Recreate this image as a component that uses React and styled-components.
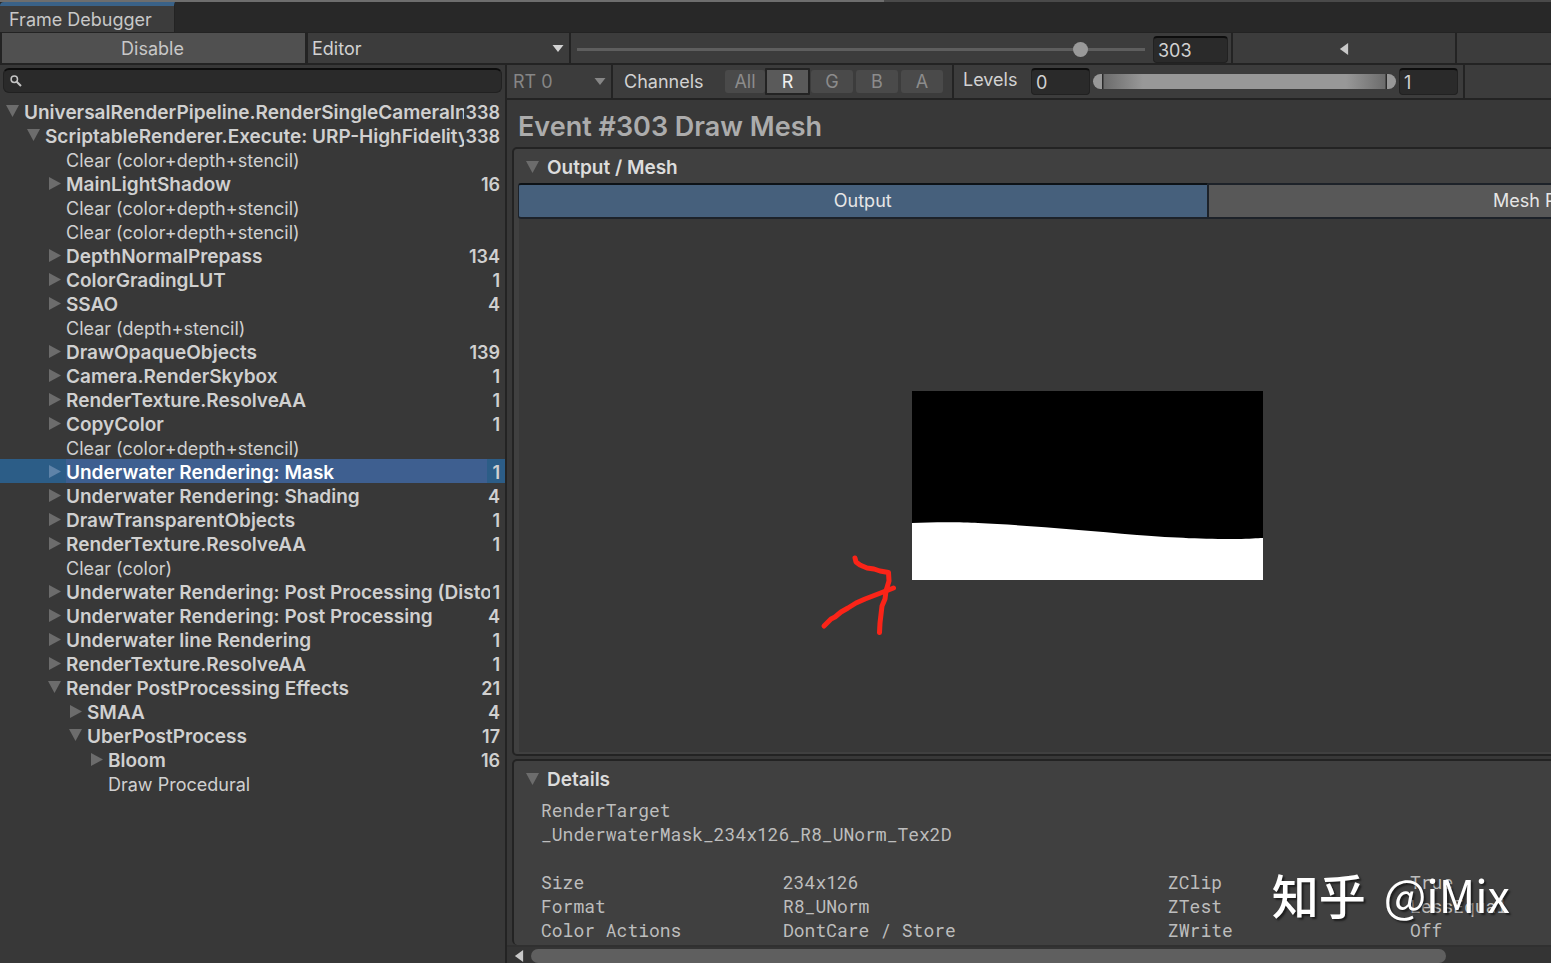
import React from "react";
import styled, { createGlobalStyle, css } from "styled-components";

const LINE = "#232323";

const GlobalStyle = createGlobalStyle`
  * { box-sizing: border-box; }
  body {
    margin: 0;
    background: #383838;
    color: #c8c8c8;
    font-family: Inter, "Liberation Sans", sans-serif;
    font-size: 18px;
    line-height: 24px;
    overflow: hidden;
  }
  button, input, select { font: inherit; color: inherit; }
`;

const Window = styled.div`
  height: 100vh;
  display: flex;
  flex-direction: column;
  overflow: hidden;
`;

const TopEdge = styled.div`
  flex: none;
  height: 2px;
  background: linear-gradient(90deg, #6e6e6e 57%, #4a4a4a 57%);
`;

const TabBar = styled.nav`
  flex: none;
  height: 31px;
  display: flex;
  background: #282828;
  border-bottom: 1px solid ${LINE};
`;

const WindowTab = styled.button`
  width: 175px;
  border: 0;
  border-right: 1px solid ${LINE};
  border-top: 4px solid #3a6288;
  border-radius: 4px 0 0 0;
  background: #3c3c3c;
  padding: 2px 9px 0;
  text-align: left;
  white-space: nowrap;
`;

const Toolbar = styled.div`
  flex: none;
  height: 32px;
  display: flex;
  background: #3c3c3c;
  border-bottom: 2px solid ${LINE};
  overflow: hidden;
`;

const DisableButton = styled.button`
  flex: none;
  width: 308px;
  border: solid ${LINE};
  border-width: 0 3px 0 2px;
  background: #505050;
  padding: 2px 2px 0 0;
`;

const SelectWrap = styled.div`
  flex: none;
  width: ${(p) => p.$width}px;
  display: flex;
  align-items: center;
  padding-right: 5px;
  border-right: 2px solid ${LINE};
  color: ${(p) => (p.$dim ? "#868686" : "#d2d2d2")};
`;

const Select = styled.select`
  flex: 1;
  min-width: 0;
  appearance: none;
  border: 0;
  background: transparent;
  padding: 1px 0 0 ${(p) => (p.$inset ? 6 : 4)}px;
  outline: 0;
`;

const SliderCell = styled.div`
  flex: none;
  width: 582px;
  padding: 0 8px 0 6px;
  display: flex;
  align-items: center;
`;

const EventSlider = styled.input`
  appearance: none;
  width: 100%;
  height: 17px;
  margin: 2px 0 0;
  background: linear-gradient(#5e5e5e, #5e5e5e) center / 100% 3px no-repeat;
  &::-webkit-slider-thumb {
    appearance: none;
    width: 15px;
    height: 15px;
    border-radius: 50%;
    background: #999;
  }
`;

const Field = styled.input`
  flex: none;
  align-self: center;
  width: ${(p) => p.$width}px;
  height: 27px;
  border: 1px solid #212121;
  border-top: 2px solid #0d0d0d;
  border-radius: 4px;
  background: #2a2a2a;
  color: #d2d2d2;
  padding: 0 4px;
  outline: 0;
`;

const EventField = styled(Field)`
  align-self: flex-end;
`;

const StepButton = styled.button`
  flex: none;
  width: 224px;
  margin-left: ${(p) => (p.$gap ? 3 : 0)}px;
  border: 0;
  border-left: 2px solid ${LINE};
  background: transparent;
  padding: 1px 0 0;
  display: flex;
  align-items: center;
  justify-content: center;
`;

const Body = styled.div`
  flex: 1;
  min-height: 0;
  display: flex;
`;

const TreePane = styled.aside`
  flex: none;
  width: 507px;
  border-right: 2px solid ${LINE};
  display: flex;
  flex-direction: column;
`;

const SearchBox = styled.label`
  flex: none;
  height: 25px;
  margin: 3px 3px 6px;
  padding: 0 6px;
  display: flex;
  align-items: center;
  gap: 6px;
  border: 1px solid #212121;
  border-top: 2px solid #0d0d0d;
  border-radius: 6px;
  background: #2a2a2a;
`;

const SearchInput = styled.input`
  flex: 1;
  min-width: 0;
  border: 0;
  padding: 0;
  outline: 0;
  background: transparent;
`;

const Tree = styled.ul`
  flex: 1;
  margin: 0;
  padding: 0;
  list-style: none;
  overflow: hidden;
`;

const Row = styled.li`
  height: 24px;
  display: flex;
  align-items: center;
  padding: 3px 5px 0 ${(p) => 6 + p.$depth * 21}px;
  white-space: nowrap;
  color: #d0d0d0;
  font-weight: ${(p) => (p.$group ? 600 : 400)};
  ${(p) =>
    p.$selected &&
    css`
      background: linear-gradient(90deg, transparent 66px, #3e5f90 66px calc(100% - 18px), transparent calc(100% - 18px)), #2c5d87;
      color: #fff;
    `}
`;

const Twisty = styled.span`
  flex: none;
  width: 18px;
  display: flex;
  align-items: center;
  padding-bottom: 3px;
  color: ${(p) => (p.$selected ? "#5f83a8" : "#6c6c6c")};
`;

const RowLabel = styled.span`
  flex: 1;
  min-width: 0;
  overflow: hidden;
  font-size: ${(p) => (p.$group ? 19 : 18)}px;
`;

const RowCount = styled.span`
  flex: none;
  padding-left: 2px;
  color: #d0d0d0;
`;

const DetailPane = styled.main`
  flex: 1;
  min-width: 0;
  display: flex;
  flex-direction: column;
  overflow: hidden;
`;

const TargetBar = styled(Toolbar)`
  height: 35px;
`;

const ChannelGroup = styled.div`
  flex: none;
  display: flex;
  align-items: center;
  padding: 0 6px 0 11px;
  border-right: 2px solid ${LINE};
`;

const GroupLabel = styled.span`
  flex: none;
  width: 101px;
  color: #d2d2d2;
`;

const Channel = styled.button`
  width: ${(p) => (p.$active ? 45 : 42)}px;
  height: ${(p) => (p.$active ? 27 : 23)}px;
  padding: 0;
  margin-right: ${(p) => (p.$active ? 1 : 3)}px;
  border: 0;
  border-radius: 3px;
  background: #4a4a4a;
  color: #8c8c8c;
  ${(p) => p.$wide && css`width: 40px; margin-right: 0;`}
  ${(p) =>
    p.$active &&
    css`
      border: 2px solid ${LINE};
      border-radius: 1px;
      background: #5a5a5a;
      color: #f0f0f0;
    `}
`;

const LevelsGroup = styled.div`
  flex: none;
  display: flex;
  align-items: center;
  gap: 3px;
  padding: 0 5px 0 9px;
  border-right: 2px solid ${LINE};
`;

const LevelsLabel = styled.span`
  width: 65px;
  padding-bottom: 3px;
  color: #d2d2d2;
`;

const LevelsTrack = styled.div`
  position: relative;
  width: 303px;
  height: 15px;
  border-radius: 8px;
  background: linear-gradient(90deg, #989898 0 9px, #2a2a2a 9px 10px, #6c6c6c 11px, #989898 50px calc(100% - 50px), #6c6c6c calc(100% - 11px), #2a2a2a calc(100% - 10px) calc(100% - 9px), #989898 calc(100% - 9px));
`;

const LevelsThumb = styled.input`
  position: absolute;
  inset: 0;
  width: 100%;
  height: 15px;
  margin: 0;
  appearance: none;
  background: transparent;
  pointer-events: none;
  &::-webkit-slider-thumb {
    appearance: none;
    width: 9px;
    height: 15px;
    background: transparent;
    pointer-events: auto;
  }
`;

const ScrollContent = styled.div`
  flex: 1;
  min-height: 0;
  width: 1396px;
  padding-left: 5px;
  display: flex;
  flex-direction: column;
  overflow: hidden;
`;

const EventTitle = styled.h1`
  flex: none;
  margin: 0;
  padding: 11px 6px 4px;
  font-size: 27px;
  line-height: 32px;
  font-weight: 600;
  color: #acacac;
`;

const Panel = styled.section`
  display: flex;
  flex-direction: column;
  background: #404040;
  border: 2px solid ${LINE};
  border-radius: 5px;
  ${(p) =>
    p.$grow
      ? css`flex: 1; min-height: 0; margin-bottom: 3px; padding: 0 5px 2px;`
      : css`flex: none; height: 186px; padding: 0; border-bottom: 0; overflow: hidden;`}
`;

const PanelHeader = styled.h2`
  flex: none;
  height: 34px;
  margin: 0;
  padding: ${(p) => p.$inset};
  display: flex;
  align-items: center;
  gap: 8px;
  font-size: 19px;
  font-weight: 600;
  color: #dcdcdc;
`;

const HeaderTwisty = styled.span`
  display: flex;
  color: #6c6c6c;
`;

const PreviewTabs = styled.div`
  flex: none;
  display: grid;
  grid-template-columns: 1fr 1fr;
  margin: 0 -1px;
`;

const PreviewTab = styled.button`
  height: 36px;
  border: 2px solid #1d2229;
  border-width: 2px 0 2px 1px;
  padding: 0;
  color: #e6e6e6;
  background: #585858;
  ${(p) =>
    p.$active &&
    css`
      background: #46607c;
      border-top-color: #0d1216;
      border-right: 1px solid #1d2229;
      border-radius: 3px 0 0 3px;
    `}
`;

const PreviewStage = styled.div`
  flex: 1;
  min-height: 0;
  background: #383838;
  display: flex;
`;

const PreviewView = styled.div`
  width: 1137px;
  display: flex;
  align-items: center;
  justify-content: center;
`;

const PreviewImage = styled.div`
  position: relative;
  width: 351px;
  height: 189px;
  & > svg { display: block; }
`;

const Annotation = styled.svg`
  position: absolute;
  left: -92px;
  top: 160px;
`;

const Details = styled.div`
  padding: 3px 27px 0;
  font-family: "Roboto Mono", "DejaVu Sans Mono", "Liberation Mono", monospace;
  color: #bdbdbd;
`;

const Line = styled.p`
  margin: 0;
`;

const PropertyTable = styled.table`
  margin-top: 24px;
  border-collapse: collapse;
  table-layout: fixed;
  width: 1012px;
  th, td {
    padding: 0;
    width: 242px;
    font-weight: 400;
    text-align: left;
    white-space: nowrap;
  }
  td:nth-child(2) { width: 385px; }
`;

const ScrollBar = styled.div`
  flex: none;
  height: 18px;
  display: flex;
  align-items: flex-end;
  padding-left: 6px;
  background: #343434;
  border-top: 2px solid #303030;
`;

const ScrollArrow = styled.button`
  flex: none;
  width: 18px;
  height: 14px;
  border: 0;
  padding: 0;
  background: transparent;
  display: flex;
  align-items: center;
`;

const ScrollThumb = styled.div`
  flex: 1;
  margin-right: 105px;
  height: 14px;
  border-radius: 7px;
  background: #5f5f5f;
`;

const Watermark = styled.div`
  position: fixed;
  right: 41px;
  bottom: 34px;
  display: flex;
  gap: 18px;
  align-items: center;
  font-family: "Noto Sans CJK SC", sans-serif;
  font-size: 45px;
  line-height: 70px;
  color: #fff;
  text-shadow: 2px 2px 2px rgba(0, 0, 0, 0.55);
  pointer-events: none;
`;

const Brand = styled.span`
  font-size: 47px;
  font-weight: 500;
`;

function Triangle({ dir, size = 13 }) {
  const points = {
    down: "0,0 13,0 6.5,12",
    right: "1,0 13,6.5 1,13",
    left: "11,0 11,13 2,6.5",
  }[dir];
  return (
    <svg width={size} height={size} viewBox="0 0 13 13" aria-hidden="true">
      <polygon points={points} fill="currentColor" />
    </svg>
  );
}

function DropArrow() {
  return (
    <svg width="12" height="7" viewBox="0 0 12 7" aria-hidden="true">
      <polygon points="0.5,0 11.5,0 6,7" fill="currentColor" />
    </svg>
  );
}

const events = [
  [0, "UniversalRenderPipeline.RenderSingleCameraIn", 338, "down"],
  [1, "ScriptableRenderer.Execute: URP-HighFidelity", 338, "down"],
  [2, "Clear (color+depth+stencil)"],
  [2, "MainLightShadow", 16, "right"],
  [2, "Clear (color+depth+stencil)"],
  [2, "Clear (color+depth+stencil)"],
  [2, "DepthNormalPrepass", 134, "right"],
  [2, "ColorGradingLUT", 1, "right"],
  [2, "SSAO", 4, "right"],
  [2, "Clear (depth+stencil)"],
  [2, "DrawOpaqueObjects", 139, "right"],
  [2, "Camera.RenderSkybox", 1, "right"],
  [2, "RenderTexture.ResolveAA", 1, "right"],
  [2, "CopyColor", 1, "right"],
  [2, "Clear (color+depth+stencil)"],
  [2, "Underwater Rendering: Mask", 1, "right", true],
  [2, "Underwater Rendering: Shading", 4, "right"],
  [2, "DrawTransparentObjects", 1, "right"],
  [2, "RenderTexture.ResolveAA", 1, "right"],
  [2, "Clear (color)"],
  [2, "Underwater Rendering: Post Processing (Disto", 1, "right"],
  [2, "Underwater Rendering: Post Processing", 4, "right"],
  [2, "Underwater line Rendering", 1, "right"],
  [2, "RenderTexture.ResolveAA", 1, "right"],
  [2, "Render PostProcessing Effects", 21, "down"],
  [3, "SMAA", 4, "right"],
  [3, "UberPostProcess", 17, "down"],
  [4, "Bloom", 16, "right"],
  [4, "Draw Procedural"],
];

const properties = [
  ["Size", "234x126", "ZClip", "True"],
  ["Format", "R8_UNorm", "ZTest", "LessEqual"],
  ["Color Actions", "DontCare / Store", "ZWrite", "Off"],
];

export default function App() {
  return (
    <Window>
      <GlobalStyle />
      <TopEdge />
      <TabBar>
        <WindowTab>Frame Debugger</WindowTab>
      </TabBar>
      <Toolbar>
        <DisableButton>Disable</DisableButton>
        <SelectWrap $width={263}>
          <Select aria-label="Target">
            <option>Editor</option>
          </Select>
          <DropArrow />
        </SelectWrap>
        <SliderCell>
          <EventSlider type="range" min="1" max="338" defaultValue="303" aria-label="Event" />
        </SliderCell>
        <EventField $width={75} defaultValue="303" aria-label="Event number" />
        <StepButton $gap aria-label="Previous event">
          <Triangle dir="left" size={12} />
        </StepButton>
        <StepButton aria-label="Next event">
          <Triangle dir="right" size={12} />
        </StepButton>
      </Toolbar>
      <Body>
        <TreePane>
          <SearchBox>
            <svg width="12" height="12" viewBox="0 0 12 12" fill="none" stroke="#c4c4c4" strokeWidth="1.5" aria-hidden="true">
              <circle cx="4.3" cy="4.3" r="3.2" />
              <path d="M6.7 6.7L11 11" strokeWidth="2" />
            </svg>
            <SearchInput type="text" aria-label="Search events" />
          </SearchBox>
          <Tree role="tree">
            {events.map(([depth, label, count, arrow, selected], i) => (
              <Row key={i} role="treeitem" aria-selected={!!selected} $depth={depth} $group={!!arrow} $selected={selected}>
                <Twisty $selected={selected}>{arrow && <Triangle dir={arrow} />}</Twisty>
                <RowLabel $group={!!arrow}>{label}</RowLabel>
                {count && <RowCount>{count}</RowCount>}
              </Row>
            ))}
          </Tree>
        </TreePane>
        <DetailPane>
          <TargetBar>
            <SelectWrap $width={106} $dim>
              <Select $inset aria-label="Render target">
                <option>RT 0</option>
              </Select>
              <DropArrow />
            </SelectWrap>
            <ChannelGroup>
              <GroupLabel>Channels</GroupLabel>
              <Channel $wide>All</Channel>
              <Channel $active>R</Channel>
              <Channel>G</Channel>
              <Channel>B</Channel>
              <Channel>A</Channel>
            </ChannelGroup>
            <LevelsGroup>
              <LevelsLabel>Levels</LevelsLabel>
              <Field $width={59} defaultValue="0" aria-label="Black level" />
              <LevelsTrack>
                <LevelsThumb type="range" min="0" max="1" step="0.01" defaultValue="0" aria-label="Minimum level" />
                <LevelsThumb type="range" min="0" max="1" step="0.01" defaultValue="1" aria-label="Maximum level" />
              </LevelsTrack>
              <Field $width={59} defaultValue="1" aria-label="White level" />
            </LevelsGroup>
          </TargetBar>
          <ScrollContent>
            <EventTitle>Event #303 Draw Mesh</EventTitle>
            <Panel $grow>
              <PanelHeader $inset="3px 7px 0">
                <HeaderTwisty><Triangle dir="down" /></HeaderTwisty>
                Output / Mesh
              </PanelHeader>
              <PreviewTabs>
                <PreviewTab $active>Output</PreviewTab>
                <PreviewTab>Mesh Preview</PreviewTab>
              </PreviewTabs>
              <PreviewStage>
                <PreviewView>
                  <PreviewImage>
                    <svg width="351" height="189" viewBox="0 0 351 189" aria-hidden="true">
                      <rect width="351" height="189" fill="#000" />
                      <path d="M0 132C20 131 50 131 66 132C110 134 170 139 225 144C265 147 290 148 325 148C338 148 345 147 351 147V189H0Z" fill="#fff" />
                    </svg>
                    <Annotation width="84" height="90" viewBox="0 0 84 90" fill="none" stroke="#fb2418" strokeWidth="5" strokeLinecap="round" strokeLinejoin="round" aria-hidden="true">
                      <path d="M35 7L36 11L40 14L47 17L54 18L60 20L68.500 21.500L69 30L66 40L65 48L62 55L60 72L59.500 81.500" />
                      <path d="M4 75L7 72L11 68L15 66L21 61L28 57L36 52L45 48L58 43L73.500 37" />
                    </Annotation>
                  </PreviewImage>
                </PreviewView>
              </PreviewStage>
            </Panel>
            <Panel>
              <PanelHeader $inset="3px 12px 0">
                <HeaderTwisty><Triangle dir="down" /></HeaderTwisty>
                Details
              </PanelHeader>
              <Details>
                <Line>RenderTarget</Line>
                <Line>_UnderwaterMask_234x126_R8_UNorm_Tex2D</Line>
                <PropertyTable>
                  <tbody>
                    {properties.map(([a, b, c, d]) => (
                      <tr key={a}>
                        <th scope="row">{a}</th>
                        <td>{b}</td>
                        <th scope="row">{c}</th>
                        <td>{d}</td>
                      </tr>
                    ))}
                  </tbody>
                </PropertyTable>
              </Details>
            </Panel>
          </ScrollContent>
          <ScrollBar>
            <ScrollArrow aria-label="Scroll left">
              <Triangle dir="left" size={12} />
            </ScrollArrow>
            <ScrollThumb />
          </ScrollBar>
        </DetailPane>
      </Body>
      <Watermark>
        <Brand>知乎</Brand>
        <span>@iMix</span>
      </Watermark>
    </Window>
  );
}
